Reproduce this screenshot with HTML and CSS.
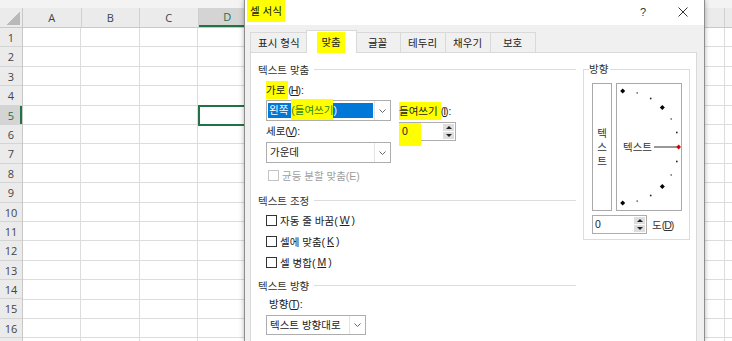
FILE: index.html
```html
<!DOCTYPE html>
<html lang="ko">
<head>
    <meta charset="UTF-8">
    <meta name="viewport" content="width=device-width, initial-scale=1.0">
    <title>셀 서식</title>
    <link rel="stylesheet" href="styles.css">
</head>
<body>
    <!-- 워크시트 -->
    <div class="sheet">
        <div class="top-strip"></div>
        <div class="head-row">
            <div class="corner"><span class="corner-tri"></span></div>
            <div class="col-heads">
                <div class="col-head">A</div>
                <div class="col-head">B</div>
                <div class="col-head">C</div>
                <div class="col-head active">D</div>
                <div class="col-head"></div>
                <div class="col-head"></div>
                <div class="col-head"></div>
                <div class="col-head"></div>
                <div class="col-head"></div>
                <div class="col-head"></div>
                <div class="col-head"></div>
                <div class="col-head"></div>
                <div class="col-head"></div>
            </div>
        </div>
        <div class="body-row">
            <div class="row-heads">
                <div class="row-head">1</div>
                <div class="row-head">2</div>
                <div class="row-head">3</div>
                <div class="row-head">4</div>
                <div class="row-head active">5</div>
                <div class="row-head">6</div>
                <div class="row-head">7</div>
                <div class="row-head">8</div>
                <div class="row-head">9</div>
                <div class="row-head">10</div>
                <div class="row-head">11</div>
                <div class="row-head">12</div>
                <div class="row-head">13</div>
                <div class="row-head">14</div>
                <div class="row-head">15</div>
                <div class="row-head">16</div>
                <div class="row-head"></div>
            </div>
            <div class="cells">
                <div class="active-cell"></div>
            </div>
        </div>
    </div>

    <!-- 셀 서식 대화상자 -->
    <div class="dialog">
        <div class="title-bar">
            <span class="title hl">셀 서식</span>
            <span class="help">?</span>
            <svg class="close" width="10" height="10" viewBox="0 0 10 10">
                <path d="M0.5 0.5 L9.5 9.5 M9.5 0.5 L0.5 9.5" stroke="#333" stroke-width="1" fill="none"/>
            </svg>
        </div>

        <div class="dialog-body">
            <div class="tabs">
                <div class="tab">표시 형식</div>
                <div class="tab selected"><span class="hl">맞춤</span></div>
                <div class="tab">글꼴</div>
                <div class="tab">테두리</div>
                <div class="tab">채우기</div>
                <div class="tab">보호</div>
            </div>

            <div class="panel">
                <div class="left-col">
                    <div class="group-head"><span>텍스트 맞춤</span><i class="rule"></i></div>

                    <div class="align-row">
                        <div class="align-fields">
                            <div class="field-label"><span class="hl">가로</span>(<span class="key">H</span>):</div>
                            <div class="combo">
                                <div class="combo-value">
                                    <span class="sel">왼쪽 <span class="hl-sel">(들여쓰기</span>)</span>
                                </div>
                                <div class="combo-btn"><svg width="7" height="4" viewBox="0 0 7 4"><path d="M0.5 0.5 L3.5 3.5 L6.5 0.5" stroke="#666" fill="none"/></svg></div>
                            </div>
                            <div class="field-label">세로(<span class="key">V</span>):</div>
                            <div class="combo">
                                <div class="combo-value">가운데</div>
                                <div class="combo-btn"><svg width="7" height="4" viewBox="0 0 7 4"><path d="M0.5 0.5 L3.5 3.5 L6.5 0.5" stroke="#666" fill="none"/></svg></div>
                            </div>
                        </div>
                        <div class="indent-fields">
                            <div class="field-label"><span class="hl">들여쓰기</span>(<span class="key">I</span>):</div>
                            <div class="spin">
                                <span class="hl-block"></span>
                                <div class="spin-value">0</div>
                                <div class="spin-btns">
                                    <span class="spin-up"></span>
                                    <span class="spin-down"></span>
                                </div>
                            </div>
                        </div>
                    </div>

                    <div class="check disabled"><span class="box"></span>균등 분할 맞춤(E)</div>

                    <div class="group-head gap-top"><span>텍스트 조정</span><i class="rule"></i></div>
                    <div class="check first"><span class="box"></span>자동 줄 바꿈(<span class="key">W</span>)</div>
                    <div class="check"><span class="box"></span>셀에 맞춤(<span class="key">K</span>)</div>
                    <div class="check"><span class="box"></span>셀 병합(<span class="key">M</span>)</div>

                    <div class="group-head gap-mid"><span>텍스트 방향</span><i class="rule"></i></div>
                    <div class="field-label dir-label">방향(<span class="key">T</span>):</div>
                    <div class="combo dir-combo">
                        <div class="combo-value">텍스트 방향대로</div>
                        <div class="combo-btn"><svg width="7" height="4" viewBox="0 0 7 4"><path d="M0.5 0.5 L3.5 3.5 L6.5 0.5" stroke="#666" fill="none"/></svg></div>
                    </div>
                </div>

                <fieldset class="orient">
                    <legend>방향</legend>
                    <div class="orient-boxes">
                        <div class="vert-text"><span>텍</span><span>스</span><span>트</span></div>
                        <div class="dial">
                            <svg width="64" height="126" viewBox="0 0 64 126">
                                <line x1="37" y1="63" x2="61" y2="63" stroke="#333" stroke-width="1"/>
                                <polygon points="5.7,4.5 8.2,7 5.7,9.5 3.2,7" fill="#000"/>
                                <rect x="19.4" y="8.1" width="1.6" height="1.6" fill="#777"/>
                                <rect x="32.9" y="13.7" width="1.6" height="1.6" fill="#222"/>
                                <polygon points="45.3,20.9 47.8,23.4 45.3,25.9 42.8,23.4" fill="#000"/>
                                <rect x="53.4" y="34.2" width="1.6" height="1.6" fill="#777"/>
                                <rect x="59" y="47.7" width="1.6" height="1.6" fill="#222"/>
                                <polygon points="61.7,60.5 64,63 61.7,65.5 59.2,63" fill="#d00"/>
                                <rect x="59" y="76.7" width="1.6" height="1.6" fill="#222"/>
                                <rect x="53.4" y="90.2" width="1.6" height="1.6" fill="#777"/>
                                <polygon points="45.3,100.1 47.8,102.6 45.3,105.1 42.8,102.6" fill="#000"/>
                                <rect x="32.9" y="110.7" width="1.6" height="1.6" fill="#222"/>
                                <rect x="19.4" y="116.3" width="1.6" height="1.6" fill="#777"/>
                                <polygon points="5.7,116.5 8.2,119 5.7,121.5 3.2,119" fill="#000"/>
                            </svg>
                            <span class="dial-text">텍스트</span>
                        </div>
                    </div>
                    <div class="deg-row">
                        <div class="spin deg-spin">
                            <div class="spin-value">0</div>
                            <div class="spin-btns">
                                <span class="spin-up"></span>
                                <span class="spin-down"></span>
                            </div>
                        </div>
                        <span class="deg-label">도(<span class="key">D</span>)</span>
                    </div>
                </fieldset>
            </div>
        </div>
    </div>
</body>
</html>
```

FILE: styles.css
```css
* {
    margin: 0;
    padding: 0;
    box-sizing: border-box;
}

body {
    width: 732px;
    height: 341px;
    background: #fff;
    font-family: "Liberation Sans", "Noto Sans CJK KR", sans-serif;
    font-size: 10.5px;
    color: #222;
    position: relative;
    overflow: hidden;
}

/* 단축키 밑줄 */
.key {
    text-decoration: underline;
    text-underline-offset: 1px;
    margin: 0 -1px;
}

/* 워크시트 */
.sheet {
    width: 100%;
    height: 100%;
    overflow: hidden;
    font-family: "Open Sans", "Liberation Sans", sans-serif;
    font-size: 11px;
    color: #444;
}

.top-strip {
    height: 8px;
    background: #f3f3f3;
}

.head-row {
    display: flex;
    height: 20px;
    background: #ebebeb;
    border-bottom: 1px solid #c8c8c8;
}

.corner {
    width: 23px;
    border-right: 1px solid #c8c8c8;
    display: flex;
    align-items: flex-end;
    justify-content: flex-end;
    padding: 0 2px 2px 0;
}

.corner-tri {
    width: 13px;
    height: 13px;
    background: linear-gradient(to top left, #b9b9b9 50%, transparent 50%);
}

.col-heads {
    flex: 1;
    display: flex;
    overflow: hidden;
}

.col-head {
    width: 58.5px;
    flex-shrink: 0;
    border-right: 1px solid #d0d0d0;
    text-align: center;
    line-height: 19px;
}

.col-head.active {
    background: #d4d4d4;
    color: #217346;
    border-bottom: 2px solid #217346;
    line-height: 17px;
}

.body-row {
    display: flex;
    height: 313px;
}

.row-heads {
    width: 23px;
    background: #ebebeb;
    border-right: 1px solid #c8c8c8;
}

.row-head {
    height: 19.4px;
    line-height: 19px;
    border-bottom: 1px solid #d4d4d4;
    text-align: center;
}

.row-head.active {
    background: #d4d4d4;
    color: #217346;
    box-shadow: inset -2px 0 0 #217346;
}

.cells {
    flex: 1;
    position: relative;
    background-image:
        repeating-linear-gradient(to right, transparent 0 57.5px, #dcdcdc 57.5px 58.5px),
        repeating-linear-gradient(to bottom, transparent 0 18.4px, #dcdcdc 18.4px 19.4px);
}

.active-cell {
    position: absolute;
    left: 175px;
    top: 77px;
    width: 60px;
    height: 21px;
    border: 2px solid #217346;
}

/* 대화상자 */
.dialog {
    position: absolute;
    left: 244px;
    top: 0;
    width: 461px;
    height: 341px;
    background: #f0f0f0;
    border: 1px solid #8e8e8e;
    border-top: none;
    border-bottom: none;
    box-shadow: 0 0 5px rgba(0, 0, 0, 0.3);
}

.hl {
    background: #ffff00;
}

.title-bar {
    height: 25px;
    background: #fff;
    display: flex;
    align-items: flex-start;
}

.title {
    margin-left: 2px;
    padding: 0 3px;
    height: 22px;
    line-height: 23px;
    color: #111;
}

.help {
    margin-left: auto;
    line-height: 24px;
    font-size: 11px;
    color: #333;
}

.close {
    margin: 7px 16px 0 32px;
}

.dialog-body {
    padding: 5px 7px 0 5px;
}

.tabs {
    display: flex;
    align-items: flex-end;
    height: 22px;
}

.tab {
    min-width: 46px;
    height: 20px;
    padding: 0 7px;
    margin-right: -1px;
    border: 1px solid #d9d9d9;
    border-bottom: none;
    display: flex;
    align-items: center;
    justify-content: center;
    color: #222;
}

.tab.selected {
    min-width: 51px;
    height: 23px;
    margin: 0 -2px -1px -1px;
    background: #fff;
    position: relative;
    z-index: 1;
}

.tab.selected .hl {
    padding: 0 4px;
    line-height: 21px;
    margin-top: 1px;
}

.panel {
    height: 294px;
    background: #fff;
    border: 1px solid #d9d9d9;
    border-bottom: none;
    display: flex;
    align-items: flex-start;
    padding: 8px 0 0 7px;
}

.left-col {
    width: 318px;
}

.group-head {
    display: flex;
    align-items: center;
    height: 16px;
    gap: 5px;
    color: #333;
}

.group-head .rule {
    flex: 1;
    height: 1px;
    background: #dcdcdc;
}

.gap-top {
    margin-top: 9px;
}

.gap-mid {
    margin-top: 7px;
}

.field-label {
    height: 16px;
    line-height: 16px;
    color: #222;
}

.field-label .hl {
    padding: 3px 3px 3px 0;
}

.align-row {
    display: flex;
    margin-top: 5px;
}

.align-fields {
    padding-left: 8px;
    width: 133px;
}

.align-fields .combo {
    margin-top: 2px;
}

.align-fields .combo + .field-label {
    margin-top: 2px;
}

.align-fields .field-label + .combo + .field-label + .combo {
    margin-top: 3px;
}

.combo {
    display: flex;
    height: 21px;
    width: 125px;
    border: 1px solid #adadad;
    background: #fff;
}

.combo-value {
    flex: 1;
    padding: 0 3px;
    line-height: 19px;
    white-space: nowrap;
}

.combo-btn {
    width: 16px;
    border-left: 1px solid #e3e3e3;
    display: flex;
    align-items: center;
    justify-content: center;
}

.combo-value .sel {
    display: block;
    margin: 2px -2px 2px -2px;
    padding-left: 1px;
    height: 15px;
    line-height: 15px;
    background: #0078d7;
    color: #fff;
}

.hl-sel {
    background: #ffff00;
    color: #2a8a10;
    padding: 5px 0 4px 0;
}

.indent-fields {
    margin-left: 8px;
    padding-top: 21px;
}

.spin {
    position: relative;
    display: flex;
    width: 57px;
    height: 19px;
    margin-top: 3px;
    border: 1px solid #adadad;
    background: #fff;
}

.hl-block {
    position: absolute;
    left: -1px;
    top: 0;
    width: 22px;
    height: 23px;
    background: #ffff00;
}

.spin-value {
    flex: 1;
    position: relative;
    padding-left: 2px;
    line-height: 17px;
}

.spin-btns {
    width: 13px;
    display: flex;
    flex-direction: column;
    gap: 1px;
    padding: 1px;
}

.spin-up,
.spin-down {
    flex: 1;
    background: #dedede;
    display: flex;
    align-items: center;
    justify-content: center;
}

.spin-up::after {
    content: "";
    border: 3px solid transparent;
    border-bottom: 3px solid #222;
    border-top: none;
}

.spin-down::after {
    content: "";
    border: 3px solid transparent;
    border-top: 3px solid #222;
    border-bottom: none;
}

.check {
    display: flex;
    align-items: center;
    gap: 3px;
    height: 16px;
    margin-top: 5px;
    padding-left: 8px;
}

.check.first {
    margin-top: 4px;
}

.check .box {
    width: 11px;
    height: 11px;
    border: 1px solid #333;
    background: #fff;
}

.check.disabled {
    margin-top: 4px;
    padding-left: 10px;
    color: #a0a0a0;
}

.check.disabled .box {
    border-color: #c4c4c4;
}

.dir-label {
    margin-top: 3px;
    padding-left: 11px;
}

.dir-combo {
    width: 100px;
    height: 20px;
    margin: 3px 0 0 8px;
}

.dir-combo .combo-value {
    line-height: 18px;
}

/* 방향 그룹 */
.orient {
    margin-left: 7px;
    width: 107px;
    border: 1px solid #dcdcdc;
    padding: 0 7px 5px 8px;
    min-width: 0;
}

.orient legend {
    margin-left: -3px;
    padding: 0 2px 0 0;
    line-height: 16px;
    color: #333;
}

.orient-boxes {
    display: flex;
    gap: 4px;
    margin-top: 6px;
}

.vert-text {
    width: 20px;
    height: 128px;
    border: 1px solid #a9a9a9;
    display: flex;
    flex-direction: column;
    align-items: center;
    justify-content: center;
    line-height: 14px;
    color: #333;
}

.dial {
    position: relative;
    width: 66px;
    height: 128px;
    border: 1px solid #a9a9a9;
}

.dial svg {
    display: block;
}

.dial-text {
    position: absolute;
    left: 6px;
    top: 56px;
    line-height: 14px;
    color: #333;
}

.deg-row {
    display: flex;
    align-items: center;
    margin-top: 4px;
}

.deg-spin {
    width: 55px;
    margin-top: 0;
}

.deg-label {
    margin-left: 5px;
    color: #333;
}
```
